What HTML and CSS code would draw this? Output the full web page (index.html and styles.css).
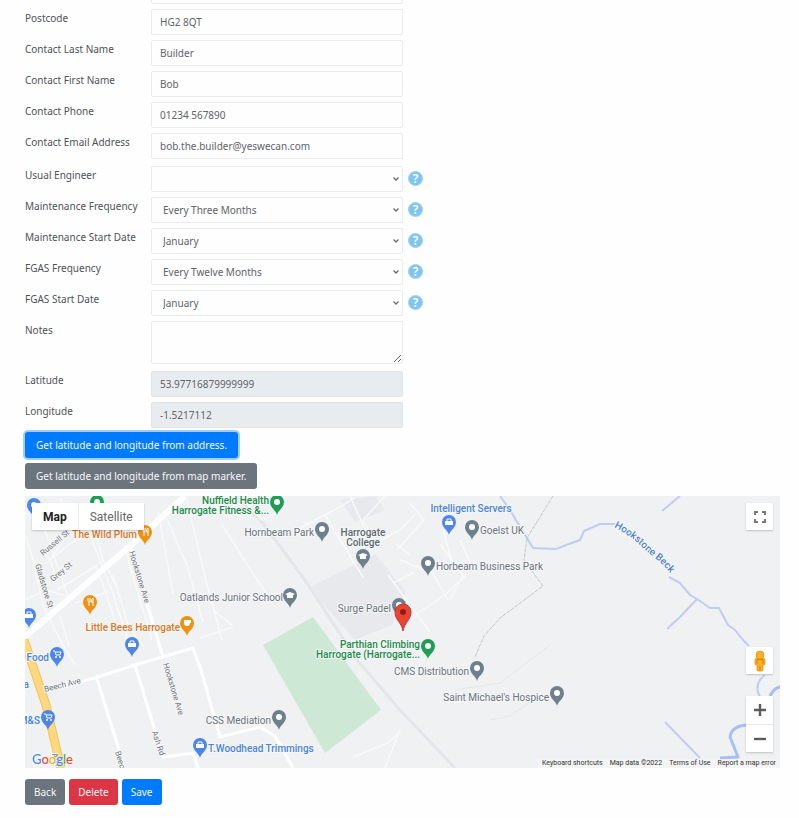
FILE: index.html
```html
<!DOCTYPE html>
<html lang="en">
<head>
<meta charset="utf-8">
<meta name="viewport" content="width=device-width, initial-scale=1">
<title>Edit site</title>
<link rel="stylesheet" href="styles.css">
</head>
<body>
<form class="page">
  <div class="fields">
    <div class="group">
      <div class="row"><label for="county"></label><input class="control" id="county" type="text"></div>
      <div class="row"><label for="postcode">Postcode</label><input class="control" id="postcode" type="text" value="HG2 8QT"></div>
      <div class="row"><label for="last">Contact Last Name</label><input class="control" id="last" type="text" value="Builder"></div>
      <div class="row"><label for="first">Contact First Name</label><input class="control" id="first" type="text" value="Bob"></div>
      <div class="row"><label for="phone">Contact Phone</label><input class="control" id="phone" type="text" value="01234 567890"></div>
      <div class="row"><label for="email">Contact Email Address</label><input class="control" id="email" type="text" value="bob.the.builder@yeswecan.com"></div>
    </div>
    <div class="group">
      <div class="row"><label for="engineer">Usual Engineer</label>
        <div class="picker"><select class="control" id="engineer"><option></option></select><svg class="chevron" viewBox="0 0 8 6"><path d="M1.5 1.5 4 4 6.5 1.5"/></svg></div>
        <button class="help" type="button">?</button></div>
      <div class="row"><label for="mfreq">Maintenance Frequency</label>
        <div class="picker"><select class="control" id="mfreq"><option>Every Three Months</option></select><svg class="chevron" viewBox="0 0 8 6"><path d="M1.5 1.5 4 4 6.5 1.5"/></svg></div>
        <button class="help" type="button">?</button></div>
      <div class="row"><label for="mstart">Maintenance Start Date</label>
        <div class="picker"><select class="control" id="mstart"><option>January</option></select><svg class="chevron" viewBox="0 0 8 6"><path d="M1.5 1.5 4 4 6.5 1.5"/></svg></div>
        <button class="help" type="button">?</button></div>
      <div class="row"><label for="ffreq">FGAS Frequency</label>
        <div class="picker"><select class="control" id="ffreq"><option>Every Twelve Months</option></select><svg class="chevron" viewBox="0 0 8 6"><path d="M1.5 1.5 4 4 6.5 1.5"/></svg></div>
        <button class="help" type="button">?</button></div>
      <div class="row"><label for="fstart">FGAS Start Date</label>
        <div class="picker"><select class="control" id="fstart"><option>January</option></select><svg class="chevron" viewBox="0 0 8 6"><path d="M1.5 1.5 4 4 6.5 1.5"/></svg></div>
        <button class="help" type="button">?</button></div>
      <div class="row"><label for="notes">Notes</label><textarea class="control notes" id="notes"></textarea></div>
    </div>
    <div class="group">
      <div class="row"><label for="lat">Latitude</label><input class="control" id="lat" type="text" value="53.97716879999999" readonly></div>
      <div class="row"><label for="lng">Longitude</label><input class="control" id="lng" type="text" value="-1.5217112" readonly></div>
    </div>
  </div>

  <div class="lookups">
    <button class="btn primary ring" type="button">Get latitude and longitude from address.</button>
    <button class="btn secondary" type="button">Get latitude and longitude from map marker.</button>
  </div>

  <div class="map">
    <svg class="tiles" viewBox="25 496 755 272" preserveAspectRatio="xMidYMid slice">
      <defs>
        <path id="pin" d="M0 13C-1 8-7 6-7 0a7 7 0 1 1 14 0C7 6 1 8 0 13Z"/>
        <path id="beck" d="M614 527C625 533 633 538 643 548S660 559 673 577"/>
        <g id="cart"><path class="glyph-line" d="M-4-3h2l1 4h4l1-3h-5"/><circle cx="-1" cy="3" r="1"/><circle cx="3" cy="3" r="1"/></g>
        <g id="bag"><path d="M-4-1h8v4h-8z"/><path class="glyph-line" d="M-2-1v-2h4v2"/></g>
        <path id="cap" d="M-5-1 0-3 5-1 3 0v3h-6V0Z"/>
        <path id="fork" class="glyph-line" d="M-2-4v3q0 1 1 1v4M0-4v3q0 1-1 1M3 4v-8q-2 1-2 4h2"/>
        <path id="cup" d="M-3-3h7v3H3q0 3-3 3t-3-3Z"/>
      </defs>
      <path class="land" d="M25 496h755v272H25z"/>
      <path class="campus" d="M309 588 375 554 406 592 392 625 355 640Z"/>
      <path class="campus" d="M340 500 375 496 385 510 355 522Z"/>
      <path class="park" d="M263 645 313 617 381 710 325 753Z"/>
      <path class="rail" d="M236 496 263 523 307 583 357 660 400 710 455 768"/>

      <g class="street">
        <path d="M25 535 33 560 43 605 60 640 75 665M25 512 45 530 68 596M60 498 74 525 50 560 45 553M50 560 55 575M72 527 92 518M57 590 96 566M50 560 72 542 90 537M96 565 115 620M91 538 110 585 128 640M113 575 128 625 143 646M124 545 137 590 152 640M60 615 69 647M75 603 108 592M25 600 45 590 68 596"/>
        <path d="M96 535 103 560 117 588M165 515 187 565 203 622M158 511 173 594M187 500 207 585M207 585 222 640M222 525 270 600M243 500 262 520 280 512"/>
        <path d="M300 528 325 515 355 498M325 515 363 577M350 496 372 545M377 545 363 520 385 496M372 545 400 530 415 515M410 503 424 520 397 550M400 560 433 573 448 600M397 545 410 555M388 575 430 632M393 583 415 572M400 625 445 595 466 575M440 544 463 575 450 600M443 530 455 573M460 540 475 573"/>
        <path d="M200 638 233 627M213 610 232 625M353 757 388 743 401 730M385 768 400 730"/>
      </g>
      <g class="road">
        <path d="M60 688 88 680 135 665 193 648 201 670 220 737 260 727 275 736 293 768M97 679 120 753 124 768M135 665 163 757 193 753 198 768M130 547 157 637 163 657"/>
      </g>
      <path class="avenue" d="M25 637 130 546 185 496"/>
      <path class="highway-edge" d="M24 640 46 705 61 768"/>
      <path class="highway" d="M24 640 46 705 61 768"/>

      <g class="river">
        <path d="M500 496 510 510 522 530 533 548 556 549 569 544 580 540 584 531 600 524 615 524M669 577 680 583 690 595 697 599 710 608 719 608 728 625 735 630 743 640 749 646M697 599 680 617 667 629M662 511 680 496M665 722 700 758M765 675Q753 684 760 697"/>
        <path class="wide" d="M749 725Q732 725 730 737L738 757 720 758M770 696Q774 688 780 687"/>
      </g>
      <path class="footpath" d="M553 496 527 538 524 560 543 586 500 618 484 636 475 657"/>
      <path class="trail" d="M455 690 500 683 550 645M490 720 510 716 530 702"/>

      <g class="place gray">
        <text x="314" y="536" text-anchor="end">Hornbeam Park</text>
        <text class="strong" x="363" y="536" text-anchor="middle">Harrogate</text>
        <text class="strong" x="363" y="546" text-anchor="middle">College</text>
        <text x="283" y="601" text-anchor="end">Oatlands Junior School</text>
        <text x="391" y="612" text-anchor="end">Surge Padel</text>
        <text x="480" y="534">Goelst UK</text>
        <text x="436" y="570">Horbeam Business Park</text>
        <text x="469" y="675" text-anchor="end">CMS Distribution</text>
        <text x="549" y="701" text-anchor="end">Saint Michael's Hospice</text>
        <text x="271" y="724" text-anchor="end">CSS Mediation</text>
      </g>
      <g class="place green">
        <text x="269" y="504" text-anchor="end">Nuffield Health</text>
        <text x="269" y="514" text-anchor="end">Harrogate Fitness &amp;...</text>
        <text x="420" y="648" text-anchor="end">Parthian Climbing</text>
        <text x="420" y="658" text-anchor="end">Harrogate (Harrogate...</text>
      </g>
      <g class="place orange">
        <text x="137" y="538" text-anchor="end">The Wild Plum</text>
        <text x="180" y="631" text-anchor="end">Little Bees Harrogate</text>
      </g>
      <g class="place blue">
        <text x="471" y="512" text-anchor="middle">Intelligent Servers</text>
        <text x="208" y="752">T.Woodhead Trimmings</text>
        <text x="49" y="661" text-anchor="end">Food</text>
        <text x="40" y="724" text-anchor="end">M&amp;S</text>
        <text x="29" y="688" text-anchor="end">Asda</text>
      </g>
      <g class="streetname">
        <text transform="translate(43 556) rotate(-40)">Russell St</text>
        <text transform="translate(53 582) rotate(-40)">Grey St</text>
        <text transform="translate(35 565) rotate(73)">Gladstone St</text>
        <text transform="translate(129 552) rotate(73)">Hookstone Ave</text>
        <text transform="translate(163 664) rotate(73)">Hookstone Ave</text>
        <text transform="translate(45 692) rotate(-14)">Beech Ave</text>
        <text transform="translate(152 732) rotate(72)">Ash Rd</text>
        <text transform="translate(115 752) rotate(73)">Beech Grove</text>
        <text transform="translate(52 754) rotate(73)">A61</text>
      </g>
      <text class="water"><textPath href="#beck">Hookstone Beck</textPath></text>

      <g class="pins gray">
        <g transform="translate(322 529)"><use href="#pin"/><circle r="3"/></g>
        <g transform="translate(363 556)"><use href="#pin"/><use class="glyph" href="#cap"/></g>
        <g transform="translate(290 595)"><use href="#pin"/><use class="glyph" href="#cap"/></g>
        <g transform="translate(399 605)"><use href="#pin"/><circle r="3"/></g>
        <g transform="translate(472 527)"><use href="#pin"/><circle r="3"/></g>
        <g transform="translate(428 563)"><use href="#pin"/><circle r="3"/></g>
        <g transform="translate(477 668)"><use href="#pin"/><circle r="3"/></g>
        <g transform="translate(557 693)"><use href="#pin"/><circle r="3"/></g>
        <g transform="translate(279 717)"><use href="#pin"/><circle r="3"/></g>
      </g>
      <g class="pins green">
        <g transform="translate(277 502)"><use href="#pin"/><circle r="3"/></g>
        <g transform="translate(428 646)"><use href="#pin"/><circle r="3"/></g>
        <g transform="translate(97 502)"><use href="#pin"/><circle r="3"/></g>
      </g>
      <g class="pins blue">
        <g transform="translate(449 522)"><use href="#pin"/><use class="glyph" href="#bag"/></g>
        <g transform="translate(200 745)"><use href="#pin"/><use class="glyph" href="#bag"/></g>
        <g transform="translate(132 644)"><use href="#pin"/><use class="glyph" href="#bag"/></g>
        <g transform="translate(57 654)"><use href="#pin"/><use class="glyph" href="#cart"/></g>
        <g transform="translate(48 717)"><use href="#pin"/><use class="glyph" href="#cart"/></g>
        <g transform="translate(29 615)"><use href="#pin"/><use class="glyph" href="#bag"/></g>
        <g transform="translate(34 505)"><use href="#pin"/><circle r="3"/></g>
      </g>
      <g class="pins orange">
        <g transform="translate(145 532)"><use href="#pin"/><use class="glyph" href="#fork"/></g>
        <g transform="translate(90 602)"><use href="#pin"/><use class="glyph" href="#fork"/></g>
        <g transform="translate(187 623)"><use href="#pin"/><use class="glyph" href="#cup"/></g>
      </g>
      <g class="marker" transform="translate(403 612)">
        <path d="M0 19C-1 11-8 8-8 0a8 8 0 1 1 16 0C8 8 1 11 0 19Z"/><circle r="3"/>
      </g>
    </svg>

    <div class="maptypes">
      <button class="type active" type="button">Map</button>
      <button class="type" type="button">Satellite</button>
    </div>
    <button class="tool fullscreen" type="button" aria-label="Full screen">
      <svg width="14" height="14" viewBox="0 0 14 14"><path class="tool-line" d="M2 5V2h3M9 2h3v3M12 9v3H9M5 12H2V9"/></svg>
    </button>
    <div class="tools">
      <button class="tool" type="button" aria-label="Street View">
        <svg width="14" height="22" viewBox="0 0 14 22"><path class="pegman" d="M4 8Q2 8 2 10v4q0 1 2 1v5q0 1 1 1h4q1 0 1-1v-5q2 0 2-1v-4q0-2-2-2Z"/><circle class="pegman" cx="7" cy="5" r="4"/><path class="pegman-shade" d="M4 10v4M10 10v4M7 16v5M4 9q3 2 6 0"/></svg>
      </button>
      <div class="zoom">
        <button class="tool" type="button" aria-label="Zoom in"><svg width="14" height="14" viewBox="0 0 14 14"><path class="zoom-line" d="M1 7h12M7 1v12"/></svg></button>
        <button class="tool" type="button" aria-label="Zoom out"><svg width="14" height="14" viewBox="0 0 14 14"><path class="zoom-line" d="M1 7h12"/></svg></button>
      </div>
    </div>
    <div class="logo"><span class="b">G</span><span class="r">o</span><span class="y">o</span><span class="b">g</span><span class="g">l</span><span class="r">e</span></div>
    <div class="legal"><a href="#">Keyboard shortcuts</a><span>Map data ©2022</span><a href="#">Terms of Use</a><a href="#">Report a map error</a></div>
  </div>

  <div class="actions">
    <button class="btn secondary" type="button">Back</button>
    <button class="btn danger" type="button">Delete</button>
    <button class="btn primary" type="button">Save</button>
  </div>
</form>
</body>
</html>
```
FILE: styles.css
```css
* { box-sizing: border-box; }

body {
  margin: 0;
  overflow-x: hidden;
  background: #fefefe;
  color: #4e5256;
  font: 10px/18px "Noto Sans", "Open Sans", sans-serif;
}

button, input, select, textarea { font: inherit; }

.page { padding: 0 19px 12px 25px; }

.fields {
  display: flex;
  flex-direction: column;
  gap: 7px;
  margin-top: -22px;
}

.group {
  display: flex;
  flex-direction: column;
  gap: 5px;
}

.row {
  display: grid;
  grid-template-columns: 126px 252px 20px;
  align-items: start;
}

.control {
  display: block;
  width: 100%;
  height: 26px;
  margin: 0;
  padding: 0 8px;
  border: 1px solid #e9ebed;
  border-radius: 2px;
  background: #fefefe;
  color: #606469;
}

.control[readonly] { background: #e9ecef; border-color: #e1e4e7; }

.notes { height: 43px; resize: vertical; }

.picker { position: relative; }

.picker .control { appearance: none; padding: 0 11px; }

.chevron {
  position: absolute;
  right: 3px;
  top: 10px;
  width: 8px;
  height: 6px;
  fill: none;
  stroke: #6a6e72;
  stroke-width: 1.3;
  pointer-events: none;
}

.help {
  width: 15px;
  height: 15px;
  margin: 5px 0 0 5px;
  padding: 0;
  border: 1px solid #9bd4f1;
  border-radius: 50%;
  background: #80c5ef;
  color: #fff;
  font-size: 12px;
  font-weight: 600;
  line-height: 13px;
  text-align: center;
}

.lookups {
  display: flex;
  flex-direction: column;
  align-items: flex-start;
  gap: 5px;
  margin: 4px 0 7px;
}

.btn {
  height: 26px;
  padding: 0 9px;
  border: 0;
  border-radius: 3px;
  color: #f4f8fb;
}

.lookups .btn { padding: 0 11px; }

.primary { background: #007bff; }
.secondary { background: #6c757d; }
.danger { background: #dc3545; }
.ring { box-shadow: 0 0 0 2px #9fcdff; }

.actions {
  display: flex;
  gap: 4px;
  margin-top: 11px;
}

.map {
  position: relative;
  height: 272px;
  overflow: hidden;
  font-family: Roboto, sans-serif;
}

.tiles {
  display: block;
  width: 100%;
  height: 100%;
  font-size: 10px;
}

.land { fill: #f0f1f2; }
.campus { fill: #e8e9ed; }
.park { fill: #cde9d6; }

.rail, .street, .road, .avenue, .highway, .highway-edge, .river, .footpath, .trail {
  fill: none;
  stroke-linejoin: round;
}

.rail { stroke: #e5e6e9; stroke-width: 3; }
.street { stroke: #f9f9fa; stroke-width: 1.5; }
.road { stroke: #fff; stroke-width: 3; }
.avenue { stroke: #fff; stroke-width: 6; }
.highway-edge { stroke: #f3c45c; stroke-width: 9; }
.highway { stroke: #fdd87f; stroke-width: 7; }
.river { stroke: #c0ccf0; stroke-width: 2; }
.river .wide { stroke: #a6c0f3; stroke-width: 3; }
.footpath { stroke: #c3cac8; stroke-width: 1; stroke-dasharray: 4 1; }
.trail { stroke: #e5e7e8; stroke-width: 1; }

.place text, .streetname text, .water {
  paint-order: stroke;
  stroke: #f6f7f8;
  stroke-width: 2px;
  stroke-linejoin: round;
}

.place.gray { fill: #6a747c; }
.place .strong { fill: #5c6a70; font-weight: 500; }
.place.green { fill: #1c8a4a; font-weight: 500; }
.place.orange { fill: #d9781f; font-weight: 500; }
.place.blue { fill: #4b83d9; font-weight: 500; }
.streetname { fill: #70757a; font-size: 8px; }
.water { fill: #4a80c8; font-size: 10px; font-weight: 500; }

.pins.gray { fill: #6d808b; }
.pins.green { fill: #1e9e53; }
.pins.blue { fill: #4d86ea; }
.pins.orange { fill: #ee9216; }
.pins circle, .pins .glyph { fill: #fff; }
.glyph { stroke: none; }
.glyph-line { fill: none; stroke: #fff; stroke-width: 1; }

.marker path { fill: #ea4335; stroke: #c5352a; stroke-width: 1; }
.marker circle { fill: #8c1c16; }

.maptypes {
  position: absolute;
  left: 7px;
  top: 7px;
  display: flex;
  background: #fff;
  box-shadow: 0 1px 2px #0003;
}

.type {
  height: 27px;
  padding: 0 11px;
  border: 0;
  background: none;
  color: #666;
  font-size: 12px;
}

.type.active {
  border-right: 1px solid #ececec;
  color: #222;
  font-weight: 700;
}

.tool {
  display: grid;
  place-items: center;
  width: 27px;
  height: 27px;
  padding: 0;
  border: 0;
  border-radius: 1px;
  background: #fff;
  box-shadow: 0 1px 2px #0003;
}

.fullscreen {
  position: absolute;
  right: 7px;
  top: 7px;
}

.tools {
  position: absolute;
  right: 7px;
  bottom: 16px;
  display: flex;
  flex-direction: column;
  gap: 22px;
}

.zoom { background: #fff; box-shadow: 0 1px 2px #0003; }
.zoom .tool { height: 28px; box-shadow: none; }
.zoom .tool + .tool { border-top: 1px solid #e8e8e8; }

.tool-line { fill: none; stroke: #777; stroke-width: 2; }
.zoom-line { fill: none; stroke: #5c5c5c; stroke-width: 2.4; }
.pegman { fill: #fbb124; stroke: #e3941a; stroke-width: 0.8; }
.pegman-shade { fill: none; stroke: #d38312; stroke-width: 1; }

.logo {
  position: absolute;
  left: 7px;
  bottom: 0;
  font: 500 13px/18px Lato, sans-serif;
  text-shadow: 0 0 1px #fff, 0 0 2px #fff;
}

.logo .b { color: #4285f4; }
.logo .r { color: #ea4335; }
.logo .y { color: #f0b400; }
.logo .g { color: #34a853; }

.legal {
  position: absolute;
  right: 0;
  bottom: 0;
  display: flex;
  gap: 7px;
  padding: 0 4px;
  background: #f5f5f5b3;
  color: #333;
  font-size: 7px;
  line-height: 9px;
}

.legal a { color: inherit; text-decoration: none; }
```
